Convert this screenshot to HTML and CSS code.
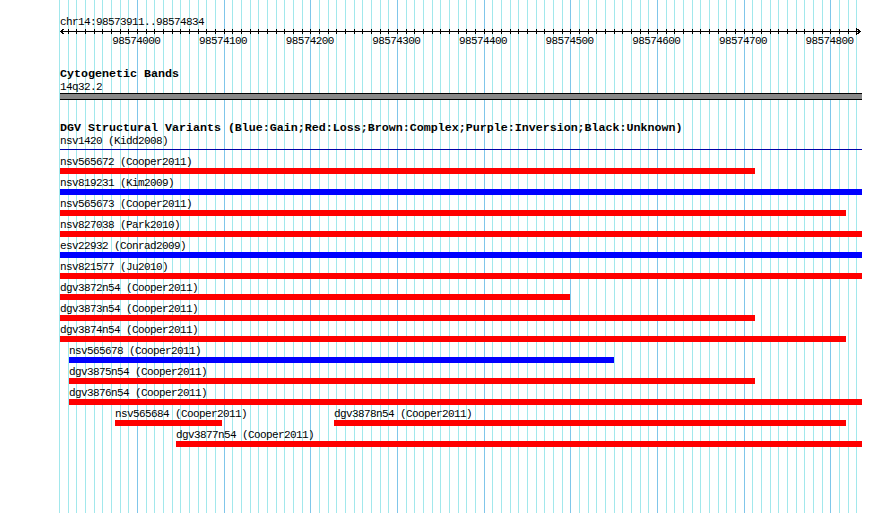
FILE: index.html
```html
<!DOCTYPE html>
<html>
  <head>
    <title>Genome Browser - chr14</title>
    <link rel="stylesheet" href="styles.css">
  </head>
  <body>
    <div class="browser">
      <div class="position">chr14:98573911..98574834</div>
      <div class="ruler">
        <svg class="arrow left" width="5" height="7"><polyline points="4.5,0.5 0.5,3.5 4.5,6.5"/></svg>
        <svg class="arrow right" width="5" height="7"><polyline points="0.5,0.5 4.5,3.5 0.5,6.5"/></svg>
      </div>
      <div class="ruler-labels">
        <span>98574000</span>
        <span>98574100</span>
        <span>98574200</span>
        <span>98574300</span>
        <span>98574400</span>
        <span>98574500</span>
        <span>98574600</span>
        <span>98574700</span>
        <span>98574800</span>
      </div>

      <div class="track-title">Cytogenetic Bands</div>
      <div class="name band-name">14q32.2</div>
      <div class="band"></div>

      <div class="track-title dgv">DGV Structural Variants (Blue:Gain;Red:Loss;Brown:Complex;Purple:Inversion;Black:Unknown)</div>
      <div class="name first">nsv1420 (Kidd2008)</div>
      <div class="thin-line"></div>

      <div class="features">
        <div class="row">
          <div class="feat" style="margin-left:0px;width:695px"><div class="name">nsv565672 (Cooper2011)</div><div class="bar loss"></div></div>
        </div>
        <div class="row">
          <div class="feat" style="margin-left:0px;width:802px"><div class="name">nsv819231 (Kim2009)</div><div class="bar gain"></div></div>
        </div>
        <div class="row">
          <div class="feat" style="margin-left:0px;width:786px"><div class="name">nsv565673 (Cooper2011)</div><div class="bar loss"></div></div>
        </div>
        <div class="row">
          <div class="feat" style="margin-left:0px;width:802px"><div class="name">nsv827038 (Park2010)</div><div class="bar loss"></div></div>
        </div>
        <div class="row">
          <div class="feat" style="margin-left:0px;width:802px"><div class="name">esv22932 (Conrad2009)</div><div class="bar gain"></div></div>
        </div>
        <div class="row">
          <div class="feat" style="margin-left:0px;width:802px"><div class="name">nsv821577 (Ju2010)</div><div class="bar loss"></div></div>
        </div>
        <div class="row">
          <div class="feat" style="margin-left:0px;width:510px"><div class="name">dgv3872n54 (Cooper2011)</div><div class="bar loss"></div></div>
        </div>
        <div class="row">
          <div class="feat" style="margin-left:0px;width:695px"><div class="name">dgv3873n54 (Cooper2011)</div><div class="bar loss"></div></div>
        </div>
        <div class="row">
          <div class="feat" style="margin-left:0px;width:786px"><div class="name">dgv3874n54 (Cooper2011)</div><div class="bar loss"></div></div>
        </div>
        <div class="row">
          <div class="feat" style="margin-left:9px;width:545px"><div class="name">nsv565678 (Cooper2011)</div><div class="bar gain"></div></div>
        </div>
        <div class="row">
          <div class="feat" style="margin-left:9px;width:686px"><div class="name">dgv3875n54 (Cooper2011)</div><div class="bar loss"></div></div>
        </div>
        <div class="row">
          <div class="feat" style="margin-left:9px;width:793px"><div class="name">dgv3876n54 (Cooper2011)</div><div class="bar loss"></div></div>
        </div>
        <div class="row">
          <div class="feat" style="margin-left:55px;width:107px"><div class="name">nsv565684 (Cooper2011)</div><div class="bar loss"></div></div>
          <div class="feat" style="margin-left:112px;width:512px"><div class="name">dgv3878n54 (Cooper2011)</div><div class="bar loss"></div></div>
        </div>
        <div class="row">
          <div class="feat" style="margin-left:116px;width:686px"><div class="name">dgv3877n54 (Cooper2011)</div><div class="bar loss"></div></div>
        </div>
      </div>
    </div>
  </body>
</html>
```

FILE: styles.css
```css
body {
  margin: 0;
  background-color: white;
  color: black;
  font-family: "Liberation Mono", "DejaVu Sans Mono", monospace;
  font-size: 11px;
  letter-spacing: -0.6px;
}
.browser {
  width: 802px;
  height: 513px;
  margin-left: 59px;
  padding-left: 1px;
  overflow: hidden;
  /* major guides every 100bp, minor every 10bp (26px = 30bp) */
  background-image:
    linear-gradient(to right, #80c6ea 0 1px, transparent 1px 87px, #80c6ea 87px 88px, transparent 88px 173px, #80c6ea 173px 174px, transparent 174px),
    linear-gradient(to right, #a2e8ec 0 1px, transparent 1px 9px, #a2e8ec 9px 10px, transparent 10px 17px, #a2e8ec 17px 18px, transparent 18px);
  background-size: 260px 100%, 26px 100%;
  background-position: 78px 0, 0 0;
}
.position {
  margin-top: 17px;
  height: 10px;
  line-height: 10px;
}
.ruler {
  position: relative;
  height: 5px;
  margin-top: 2px;
  background-image:
    linear-gradient(black, black),
    linear-gradient(to right, black 0 1px, transparent 1px 9px, black 9px 10px, transparent 10px 17px, black 17px 18px, transparent 18px);
  background-size: 801px 1px, 26px 100%;
  background-position: 0 2px, -1px 0;
  background-repeat: no-repeat, repeat-x;
}
.arrow {
  position: absolute;
  top: -1px;
  fill: none;
  stroke: black;
  stroke-width: 1;
  shape-rendering: crispEdges;
}
.arrow.left {
  left: 0;
}
.arrow.right {
  right: 1px;
}
.ruler-labels {
  display: flex;
  margin-top: 2px;
  margin-left: 33px;
  height: 10px;
  line-height: 10px;
}
.ruler-labels span {
  flex: none;
  width: 86.667px;
  text-align: center;
}
.track-title {
  margin-top: 22px;
  height: 12px;
  line-height: 12px;
  font-size: 11.67px;
  font-weight: bold;
  letter-spacing: 0;
  white-space: nowrap;
}
.name {
  height: 10px;
  line-height: 10px;
  white-space: nowrap;
}
.band-name {
  margin-top: 2px;
}
.name.first {
  margin-top: 2px;
}
.band {
  margin-top: 1px;
  height: 5px;
  border-top: 1px solid black;
  border-bottom: 1px solid black;
  background-color: #888;
}
.thin-line {
  margin-top: 3px;
  height: 1px;
  background-color: #0000a8;
}
.features {
  margin-top: 7px;
}
.row {
  display: flex;
  height: 17px;
  margin-bottom: 4px;
}
.feat {
  flex: none;
}
.bar {
  height: 6px;
  margin-top: 1px;
}
.loss {
  background-color: #ff0000;
}
.gain {
  background-color: #0000ff;
}
```
